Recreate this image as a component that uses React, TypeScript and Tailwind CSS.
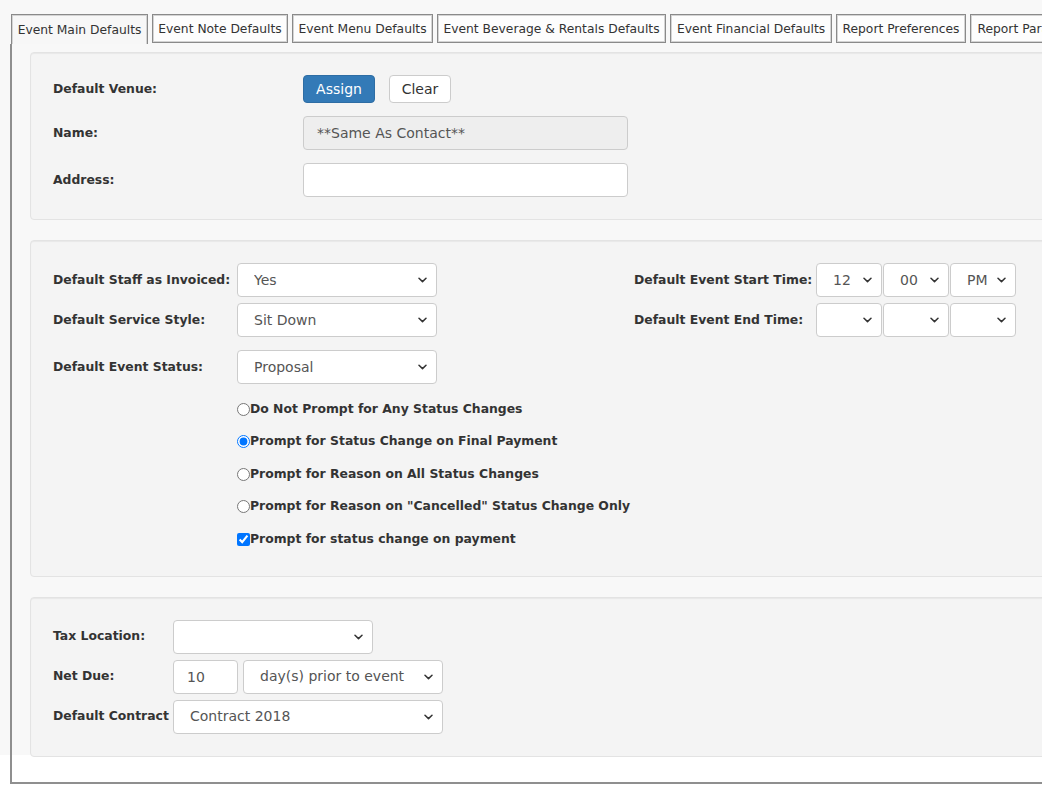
import { useState } from "react";

const tabs = [
  { label: "Event Main Defaults", width: "w-[137px]" },
  { label: "Event Note Defaults", width: "w-[136px]" },
  { label: "Event Menu Defaults", width: "w-[141px]" },
  { label: "Event Beverage & Rentals Defaults", width: "w-[229px]" },
  { label: "Event Financial Defaults", width: "w-[162px]" },
  { label: "Report Preferences", width: "w-[130px]" },
  { label: "Report Parameters", width: "w-[130px]" },
];

const statusOptions = [
  { id: "none", label: "Do Not Prompt for Any Status Changes" },
  { id: "final", label: "Prompt for Status Change on Final Payment" },
  { id: "all", label: "Prompt for Reason on All Status Changes" },
  { id: "cancelled", label: 'Prompt for Reason on "Cancelled" Status Change Only' },
];

function Chevron() {
  return (
    <svg
      className="pointer-events-none absolute right-[10px] top-1/2 -translate-y-1/2"
      width="9"
      height="6"
      viewBox="0 0 9 6"
      fill="none"
    >
      <path d="M1 1.2l3.5 3.4L8 1.2" stroke="#333" strokeWidth="1.5" strokeLinecap="round" strokeLinejoin="round" />
    </svg>
  );
}

function Select({ value, width }: { value: string; width: string }) {
  return (
    <div className={`relative h-[34px] ${width}`}>
      <select
        defaultValue={value}
        className="h-full w-full appearance-none rounded-[4px] border border-[#ccc] bg-white pl-[16px] pr-[24px] text-[14px] text-[#555] outline-none"
      >
        <option value={value}>{value}</option>
      </select>
      <Chevron />
    </div>
  );
}

function Label({ children, width }: { children: React.ReactNode; width: string }) {
  return <div className={`${width} shrink-0 text-[12.4px] font-bold text-[#333]`}>{children}</div>;
}

export default function App() {
  const [status, setStatus] = useState("final");
  const [onPayment, setOnPayment] = useState(true);

  return (
    <div className="min-h-screen overflow-hidden bg-[linear-gradient(to_bottom,#f8f8f8_755px,#fff_755px)] pl-[10px] pt-[14px] font-['DejaVu_Sans',Verdana,sans-serif]">
      <div className="w-[1400px]">
        <div className="flex items-start gap-[4px] pl-px">
          {tabs.map((tab, i) =>
            i === 0 ? (
              <div
                key={tab.label}
                className={`relative z-10 flex h-[30px] shrink-0 justify-center whitespace-nowrap border border-b-0 border-[#8a8a8a] bg-[#f7f7f7] pt-[6px] text-[12.3px] text-[#333] shadow-[inset_1px_1px_0_#d4d4d4,inset_-1px_0_0_#d4d4d4] ${tab.width}`}
              >
                {tab.label}
              </div>
            ) : (
              <div
                key={tab.label}
                className={`flex h-[29px] shrink-0 justify-center whitespace-nowrap border border-[#8a8a8a] bg-[#fdfdfd] pt-[5px] text-[12.3px] text-[#333] shadow-[inset_1px_1px_0_#d4d4d4,inset_-1px_-1px_0_#d4d4d4] ${tab.width}`}
              >
                {tab.label}
              </div>
            )
          )}
        </div>

        <div className="flex flex-col gap-[20px] border-b-2 border-l-2 border-[#8f8f8f] pb-[25px] pl-[18px] pt-[8px]">
          {/* venue */}
          <div className="rounded-[4px] border border-[#e3e3e3] bg-[#f4f4f4] pb-[22px] pl-[22px] pt-[22px] shadow-[inset_0_1px_1px_rgba(0,0,0,0.05)]">
            <div className="flex h-[28px] items-center">
              <Label width="w-[250px]">Default Venue:</Label>
              <button className="h-[28px] w-[72px] rounded-[4px] border border-[#2e6da4] bg-[#337ab7] text-[14px] text-white">
                Assign
              </button>
              <button className="ml-[14px] h-[28px] w-[62px] rounded-[4px] border border-[#ccc] bg-white text-[14px] text-[#333]">
                Clear
              </button>
            </div>
            <div className="mt-[13px] flex h-[34px] items-center">
              <Label width="w-[250px]">Name:</Label>
              <input
                readOnly
                value="**Same As Contact**"
                className="h-[34px] w-[325px] rounded-[4px] border border-[#ccc] bg-[#eee] pl-[13px] text-[14px] text-[#555] outline-none"
              />
            </div>
            <div className="mt-[13px] flex h-[34px] items-center">
              <Label width="w-[250px]">Address:</Label>
              <input className="h-[34px] w-[325px] rounded-[4px] border border-[#ccc] bg-white pl-[13px] text-[14px] text-[#555] outline-none" />
            </div>
          </div>

          {/* staff / status */}
          <div className="rounded-[4px] border border-[#e3e3e3] bg-[#f4f4f4] pb-[20px] pl-[22px] pt-[22px] shadow-[inset_0_1px_1px_rgba(0,0,0,0.05)]">
            <div className="flex">
              <div className="w-[581px]">
                <div className="flex h-[34px] items-center">
                  <Label width="w-[184px]">Default Staff as Invoiced:</Label>
                  <Select value="Yes" width="w-[200px]" />
                </div>
                <div className="mt-[6px] flex h-[34px] items-center">
                  <Label width="w-[184px]">Default Service Style:</Label>
                  <Select value="Sit Down" width="w-[200px]" />
                </div>
                <div className="mt-[13px] flex h-[34px] items-center">
                  <Label width="w-[184px]">Default Event Status:</Label>
                  <Select value="Proposal" width="w-[200px]" />
                </div>
              </div>
              <div>
                <div className="flex h-[34px] items-center">
                  <Label width="w-[182px]">Default Event Start Time:</Label>
                  <div className="flex gap-px">
                    <Select value="12" width="w-[66px]" />
                    <Select value="00" width="w-[66px]" />
                    <Select value="PM" width="w-[66px]" />
                  </div>
                </div>
                <div className="mt-[6px] flex h-[34px] items-center">
                  <Label width="w-[182px]">Default Event End Time:</Label>
                  <div className="flex gap-px">
                    <Select value="" width="w-[66px]" />
                    <Select value="" width="w-[66px]" />
                    <Select value="" width="w-[66px]" />
                  </div>
                </div>
              </div>
            </div>

            <div className="mt-[9px] pl-[184px]">
              {statusOptions.map((opt) => (
                <label key={opt.id} className="flex h-[32.5px] items-center text-[12.4px] font-bold text-[#333]">
                  <input
                    type="radio"
                    name="statusPrompt"
                    checked={status === opt.id}
                    onChange={() => setStatus(opt.id)}
                    className="h-[13px] w-[13px] accent-[#0075ff]"
                  />
                  {opt.label}
                </label>
              ))}
              <label className="flex h-[32.5px] items-center text-[12.4px] font-bold text-[#333]">
                <input
                  type="checkbox"
                  checked={onPayment}
                  onChange={(e) => setOnPayment(e.target.checked)}
                  className="h-[13px] w-[13px] accent-[#0075ff]"
                />
                Prompt for status change on payment
              </label>
            </div>
          </div>

          {/* financial */}
          <div className="rounded-[4px] border border-[#e3e3e3] bg-[#f4f4f4] pb-[22px] pl-[22px] pt-[22px] shadow-[inset_0_1px_1px_rgba(0,0,0,0.05)]">
            <div className="flex h-[34px] items-center">
              <Label width="w-[120px]">Tax Location:</Label>
              <Select value="" width="w-[200px]" />
            </div>
            <div className="mt-[6px] flex h-[34px] items-center">
              <Label width="w-[120px]">Net Due:</Label>
              <input
                defaultValue="10"
                className="h-[34px] w-[65px] rounded-[4px] border border-[#ccc] bg-white pl-[13px] text-[14px] text-[#555] outline-none"
              />
              <div className="ml-[5px]">
                <Select value="day(s) prior to event" width="w-[200px]" />
              </div>
            </div>
            <div className="mt-[6px] flex h-[34px] items-center">
              <Label width="w-[120px]">Default Contract</Label>
              <Select value="Contract 2018" width="w-[270px]" />
            </div>
          </div>
        </div>
      </div>
    </div>
  );
}
